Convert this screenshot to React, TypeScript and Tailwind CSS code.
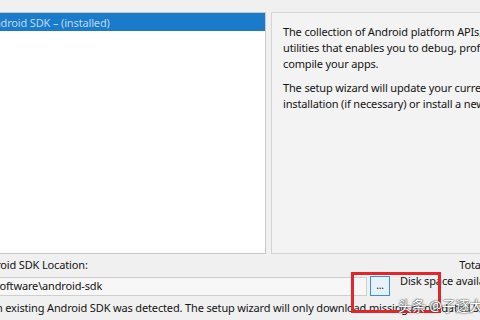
import React from 'react';

const font = { fontFamily: '"Noto Sans", "Noto Sans CJK SC", sans-serif' };

export default function App() {
    return (
        <div
            className="relative w-[480px] h-[320px] overflow-hidden bg-[#f0f0f0] text-[11px] tracking-[-0.15px] text-[#141414] flex flex-col pt-[12px]"
            style={font}
        >
            {/* list + description panes */}
            <div className="flex h-[242px] shrink-0">
                <div className="w-[266px] shrink-0 bg-white border-t border-r border-b border-[#c8c8c8]">
                    <div className="h-[18px] bg-[#1b7bcb] flex items-center overflow-hidden whitespace-nowrap">
                        <span className="ml-[-13px] text-[#bcd8f0] leading-none">Android SDK – (installed)</span>
                    </div>
                </div>
                <div className="ml-[5px] flex-1 bg-[#f3f3f3] border-t border-l border-b border-[#d4d4d4] pl-[11px] pt-[11px] leading-[16px] whitespace-nowrap overflow-hidden">
                    <p>The collection of Android platform APIs, tools and</p>
                    <p>utilities that enables you to debug, profile, and</p>
                    <p>compile your apps.</p>
                    <p className="mt-[8px]">The setup wizard will update your current Android SDK</p>
                    <p>installation (if necessary) or install a new version.</p>
                </div>
            </div>

            {/* location label */}
            <div className="flex justify-between items-center h-[22px] whitespace-nowrap">
                <span className="ml-[-24px]">Android SDK Location:</span>
                <span className="mr-[-58px]">Total disk space</span>
            </div>

            {/* location input */}
            <div className="flex items-start h-[22px] mt-[1px] whitespace-nowrap">
                <div className="w-[367px] shrink-0 h-[19px] bg-[#f7f7f7] border-t border-b border-r border-[#cfcfcf] flex items-center overflow-hidden">
                    <span className="ml-[-20px]">C:\Software\android-sdk</span>
                </div>
                <button className="shrink-0 ml-[3px] mt-[-1px] w-[20px] h-[20px] bg-[#e5f1fb] border border-[#3c8fd6] flex items-center justify-center text-[10px] leading-none pb-[3px]">
                    ...
                </button>
                <span className="shrink-0 ml-[10px] mt-[-4px]">Disk space available on drive</span>
            </div>

            {/* note */}
            <div className="whitespace-nowrap mt-[1px] leading-[16px]">
                <span className="ml-[-11px] block">An existing Android SDK was detected. The setup wizard will only download missing or outdated SDK components.</span>
            </div>

            {/* annotation */}
            <div className="absolute left-[351px] top-[272px] w-[90px] h-[41px] border-[3px] border-[#e3262b]" />
            <div
                className="absolute left-[398px] top-[295px] text-[14px] text-white whitespace-nowrap"
                style={{ textShadow: '0 0 2px #333, 0 0 1px #333' }}
            >
                头条 @子逐大
            </div>
        </div>
    );
}
